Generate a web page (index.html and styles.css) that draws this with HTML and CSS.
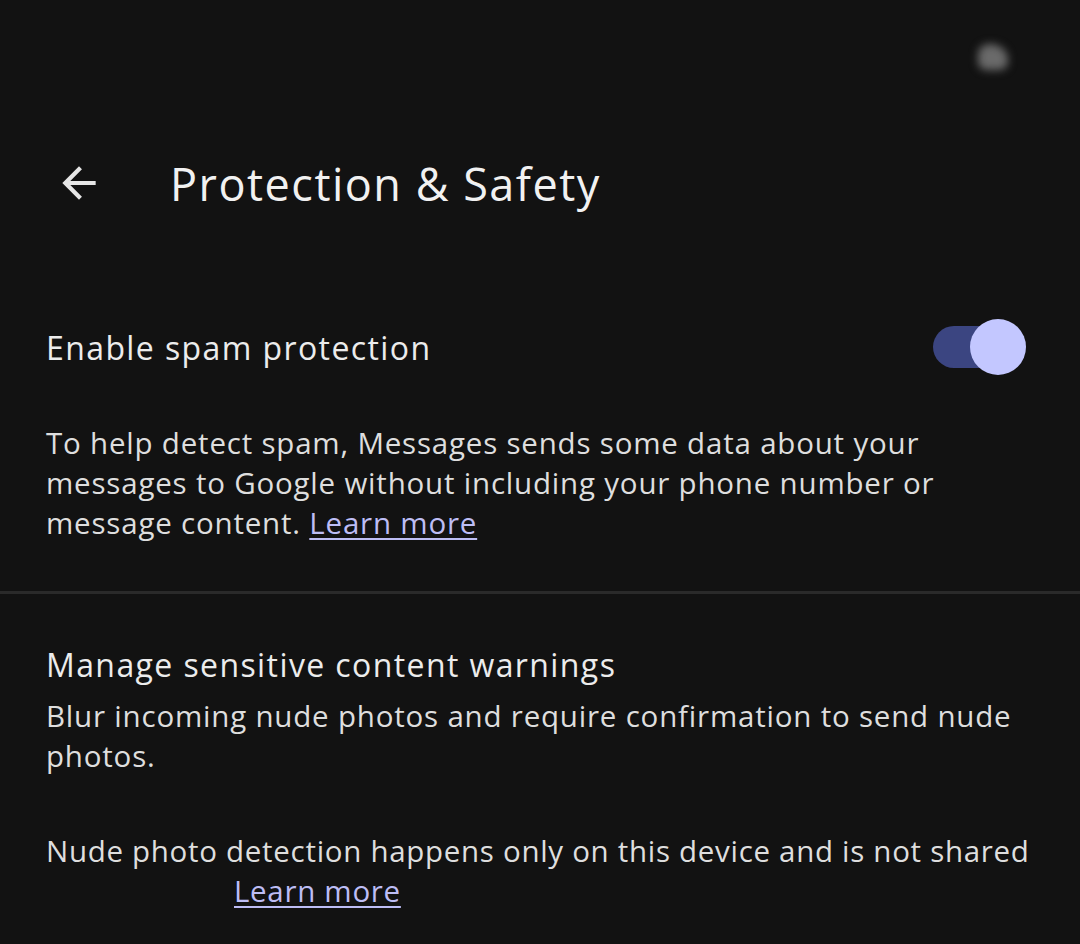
FILE: index.html
```html
<!DOCTYPE html>
<html lang="en">
<head>
<meta charset="utf-8">
<link rel="stylesheet" href="styles.css">
</head>
<body>
<div class="screen">
  <div class="status">
    <span class="blob"></span>
  </div>
  <header class="appbar">
    <svg class="back" viewBox="0 0 24 24" width="48" height="48"><path d="M20 11H7.83l5.59-5.59L12 4l-8 8 8 8 1.41-1.41L7.83 13H20v-2z" fill="#e6e6e6"/></svg>
    <h1 class="title">Protection &amp; Safety</h1>
  </header>
  <section class="setting">
    <div class="row">
      <span class="label">Enable spam protection</span>
      <span class="switch"><span class="thumb"></span></span>
    </div>
    <p class="desc">To help detect spam, Messages sends some data about your messages to Google without including your phone number or message content. <a class="link" href="#">Learn more</a></p>
  </section>
  <div class="divider"></div>
  <section class="setting second">
    <div class="label">Manage sensitive content warnings</div>
    <p class="desc tight">Blur incoming nude photos and require confirmation to send nude photos.</p>
    <p class="desc note">Nude photo detection happens only on this device and is not shared <span class="gap"></span><a class="link" href="#">Learn more</a></p>
  </section>
</div>
</body>
</html>
```
FILE: styles.css
```css
html, body {
  margin: 0;
  padding: 0;
  background: #121212;
}
.screen {
  width: 1080px;
  height: 944px;
  overflow: hidden;
  background: #121212;
  font-family: "Open Sans", Roboto, sans-serif;
  color: #e3e3e3;
}
.status {
  height: 120px;
  display: flex;
  justify-content: flex-end;
  align-items: flex-start;
  padding: 44px 72px 0 0;
  box-sizing: border-box;
}
.blob {
  width: 30px;
  height: 26px;
  border-radius: 40% 60% 30% 30%;
  background: #6a6a6a;
  filter: blur(4px);
}
.appbar {
  display: flex;
  align-items: center;
  height: 130px;
  margin-top: -2px;
  padding-left: 54px;
  box-sizing: border-box;
}
.back {
  width: 50px;
  height: 50px;
}
.title {
  margin: 0 0 0 66px;
  font-weight: 400;
  font-size: 45px;
  color: #f1f1f1;
  letter-spacing: 1.5px;
}
.setting {
  padding: 0 46px;
}
.row {
  display: flex;
  align-items: center;
  justify-content: space-between;
  height: 90px;
  margin-top: 54px;
}
.label {
  font-size: 32px;
  color: #ececec;
  letter-spacing: 1.4px;
}
.switch {
  position: relative;
  width: 92px;
  height: 42px;
  border-radius: 21px;
  background: #3b4581;
  margin-right: 9px;
}
.thumb {
  position: absolute;
  right: -1px;
  top: -7px;
  width: 56px;
  height: 56px;
  border-radius: 50%;
  background: #c3c7ff;
}
.desc {
  margin: 0;
  font-size: 29.5px;
  line-height: 40px;
  color: #dedede;
  letter-spacing: 0.8px;
}
.setting .row + .desc {
  margin-top: 31px;
}
.link {
  color: #bdbdf5;
  text-decoration: underline;
  text-underline-offset: 4px;
}
.divider {
  height: 3px;
  background: #2a2a2a;
  margin-top: 48px;
}
.second {
  padding-top: 49px;
}
.second .label {
  line-height: 44px;
}
.desc.tight {
  margin-top: 9px;
}
.desc.note {
  margin-top: 55px;
  margin-right: -40px;
  letter-spacing: 0.7px;
}
.gap {
  display: inline-block;
  width: 188px;
}
```
